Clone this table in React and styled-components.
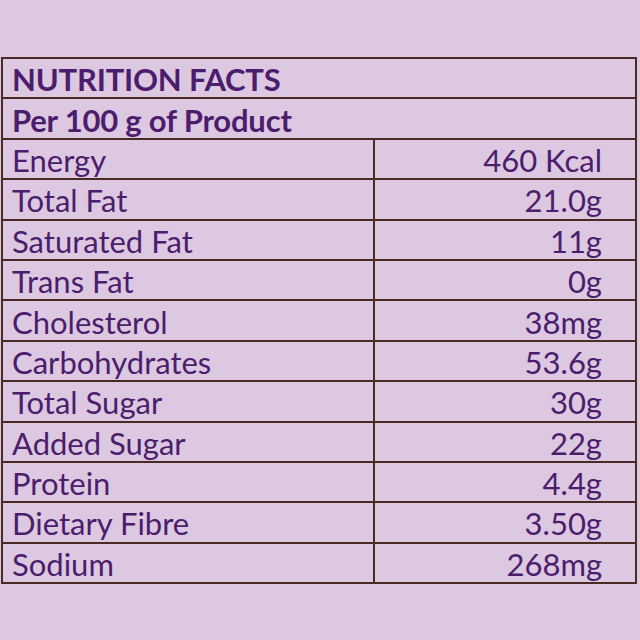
import React from "react";
import styled, { createGlobalStyle } from "styled-components";

const GlobalStyle = createGlobalStyle`
  html, body {
    margin: 0;
    padding: 0;
    background: #dcc8e1;
    font-family: Lato, "Open Sans", sans-serif;
  }
`;

const Page = styled.div`
  width: 640px;
  height: 640px;
  padding-top: 57px;
  padding-left: 1px;
  box-sizing: border-box;
`;

const Table = styled.table`
  width: 636px;
  border-collapse: collapse;
  color: #4b1d6c;
`;

const Row = styled.tr`
  height: 40.4px;
`;

const Cell = styled.td`
  border: 2px solid #4a2a22;
  padding: 2px 0 0 9px;
  font-size: 31px;
  line-height: 36px;
  font-weight: ${(p) => (p.$bold ? 700 : 400)};
  letter-spacing: ${(p) => (p.$bold ? "-0.2px" : "0")};
  text-align: ${(p) => (p.$right ? "right" : "left")};
  padding-right: ${(p) => (p.$right ? "33px" : "0")};
  width: ${(p) => p.$w || "auto"};
  white-space: nowrap;
`;

const rows = [
  ["Energy", "460 Kcal"],
  ["Total Fat", "21.0g"],
  ["Saturated Fat", "11g"],
  ["Trans Fat", "0g"],
  ["Cholesterol", "38mg"],
  ["Carbohydrates", "53.6g"],
  ["Total Sugar", "30g"],
  ["Added Sugar", "22g"],
  ["Protein", "4.4g"],
  ["Dietary Fibre", "3.50g"],
  ["Sodium", "268mg"],
];

export default function App() {
  return (
    <Page>
      <GlobalStyle />
      <Table>
        <tbody>
          <Row>
            <Cell colSpan={2} $bold>NUTRITION FACTS</Cell>
          </Row>
          <Row>
            <Cell colSpan={2} $bold>Per 100 g of Product</Cell>
          </Row>
          {rows.map(([name, value]) => (
            <Row key={name}>
              <Cell $w="361px">{name}</Cell>
              <Cell $right>{value}</Cell>
            </Row>
          ))}
        </tbody>
      </Table>
    </Page>
  );
}
